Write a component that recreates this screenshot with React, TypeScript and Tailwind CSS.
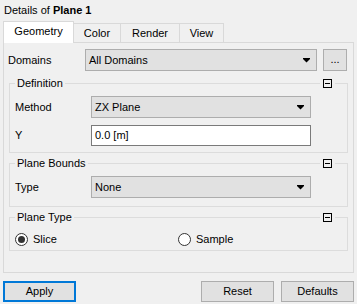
import React from "react";

function Arrow() {
  return (
    <svg width="7" height="5" viewBox="0 0 7 5" className="block">
      <rect x="0" y="0" width="7" height="1" fill="#000" />
      <path d="M0 1 H7 L3.5 4.5 Z" fill="#000" />
    </svg>
  );
}

function Select({ value, w }: { value: string; w: string }) {
  return (
    <div className={`${w} h-[22px] bg-[#e1e1e1] border border-[#adadad] flex items-center justify-between pl-[3px] pr-[6px]`}>
      <span>{value}</span>
      <Arrow />
    </div>
  );
}

function MinusBox() {
  return (
    <div className="absolute right-[12px] top-[-5px] px-[3px] bg-[#f0f0f0]">
      <div className="w-[9px] h-[9px] border border-black flex items-center justify-center">
        <div className="w-[5px] h-px bg-black" />
      </div>
    </div>
  );
}

function Group({ title, children, className }: { title: string; children: React.ReactNode; className: string }) {
  return (
    <div className={`relative border border-[#dcdcdc] ${className}`}>
      <span className="absolute left-[5px] top-[-8px] px-[2px] bg-[#f0f0f0] leading-[14px]">{title}</span>
      <MinusBox />
      {children}
    </div>
  );
}

function Radio({ checked, label }: { checked: boolean; label: string }) {
  return (
    <div className="flex items-center gap-[5px]">
      <div className="w-[13px] h-[13px] rounded-full border border-[#333] bg-white flex items-center justify-center">
        {checked && <div className="w-[7px] h-[7px] rounded-full bg-[#333]" />}
      </div>
      <span>{label}</span>
    </div>
  );
}

export default function App() {
  return (
    <div className="w-[357px] h-[304px] bg-[#f0f0f0] text-black text-[11px] font-['Liberation_Sans',sans-serif] overflow-hidden">
      <div className="h-[21px] pl-[4px] pt-[3px] leading-[14px]">
        Details of <b>Plane 1</b>
      </div>
      <div className="flex items-end pl-[3px] h-[21px]">
        <div className="w-[71px] h-[22px] -mb-px bg-white border border-[#d9d9d9] border-b-0 relative z-10 flex items-center justify-center pb-[2px]">Geometry</div>
        <div className="w-[47px] h-[19px] border border-[#d9d9d9] border-b-0 border-l-0 flex items-center justify-center">Color</div>
        <div className="w-[59px] h-[19px] border border-[#d9d9d9] border-b-0 border-l-0 flex items-center justify-center">Render</div>
        <div className="w-[44px] h-[19px] border border-[#d9d9d9] border-b-0 border-l-0 flex items-center justify-center">View</div>
      </div>
      <div className="mx-[3px] h-[231px] border border-[#d9d9d9] bg-[#f0f0f0] px-[5px] pt-[6px] flex flex-col">
        <div className="flex items-center h-[22px]">
          <span className="w-[77px] -ml-[1px]">Domains</span>
          <Select value="All Domains" w="w-[232px]" />
          <div className="ml-[6px] w-[24px] h-[22px] bg-[#e1e1e1] border border-[#adadad] flex items-center justify-center pb-[2px]">...</div>
        </div>
        <Group title="Definition" className="mt-[12px] h-[70px] pt-[12px] pl-[5px]">
          <div className="flex items-center">
            <span className="w-[76px]">Method</span>
            <Select value="ZX Plane" w="w-[220px]" />
          </div>
          <div className="flex items-center mt-[7px]">
            <span className="w-[76px]">Y</span>
            <div className="w-[220px] h-[21px] bg-white border border-[#7a7a7a] flex items-center pl-[3px]">0.0 [m]</div>
          </div>
        </Group>
        <Group title="Plane Bounds" className="mt-[10px] h-[44px] pt-[12px] pl-[5px]">
          <div className="flex items-center">
            <span className="w-[76px]">Type</span>
            <Select value="None" w="w-[220px]" />
          </div>
        </Group>
        <Group title="Plane Type" className="mt-[10px] h-[34px] pt-[13px] pl-[5px]">
          <div className="flex items-center">
            <div className="w-[163px]">
              <Radio checked label="Slice" />
            </div>
            <Radio checked={false} label="Sample" />
          </div>
        </Group>
      </div>
      <div className="flex items-center px-[3px] mt-[8px]">
        <div className="w-[73px] h-[21px] bg-[#e1e1e1] border-2 border-[#0078d7] flex items-center justify-center">Apply</div>
        <div className="flex-1" />
        <div className="w-[73px] h-[21px] bg-[#e1e1e1] border border-[#adadad] flex items-center justify-center">Reset</div>
        <div className="w-[73px] h-[21px] ml-[7px] bg-[#e1e1e1] border border-[#adadad] flex items-center justify-center">Defaults</div>
      </div>
    </div>
  );
}
